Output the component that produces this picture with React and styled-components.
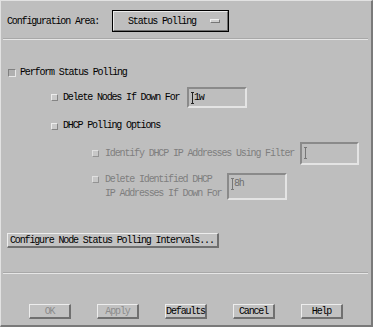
import React from "react";
import styled, { createGlobalStyle } from "styled-components";

const GlobalStyle = createGlobalStyle`
  body {
    margin: 0;
    background: #bebebe;
  }
  * {
    box-sizing: border-box;
  }
`;

const Dialog = styled.div`
  width: 373px;
  height: 327px;
  background: #bebebe;
  border-top: 1px solid #e2e2e2;
  border-left: 1px solid #e2e2e2;
  border-right: 2px solid #7a7a7a;
  border-bottom: 2px solid #7a7a7a;
  font-family: "Liberation Mono", "DejaVu Sans Mono", monospace;
  font-size: 10px;
  letter-spacing: -1.15px;
  color: #000;
  display: flex;
  flex-direction: column;
  overflow: hidden;
`;

const Header = styled.div`
  display: flex;
  align-items: center;
  height: 22px;
  margin-top: 9px;
  padding-left: 6px;
`;

const HeaderLabel = styled.span`
  width: 105px;
`;

const OptionMenu = styled.div`
  width: 117px;
  height: 22px;
  border: 1px solid #000;
  display: flex;
`;

const OptionFace = styled.div`
  flex: 1;
  display: flex;
  align-items: center;
  padding-left: 14px;
  border-top: 1px solid #ececec;
  border-left: 1px solid #ececec;
  border-right: 1px solid #6e6e6e;
  border-bottom: 1px solid #6e6e6e;
`;

const OptionText = styled.span`
  width: 82px;
`;

const Indicator = styled.span`
  width: 10px;
  height: 4px;
  background: #cfcfcf;
  border-top: 1px solid #f0f0f0;
  border-left: 1px solid #f0f0f0;
  border-right: 1px solid #777;
  border-bottom: 1px solid #777;
`;

const Separator = styled.div`
  margin: ${(p) => p.$top}px 3px 0 2px;
  height: 2px;
  border-top: 1px solid #a8a8a8;
  border-bottom: 1px solid #e6e6e6;
`;

const Row = styled.div`
  display: flex;
  align-items: ${(p) => (p.$top ? "flex-start" : "center")};
  margin-top: ${(p) => p.$mt}px;
  padding-left: ${(p) => p.$indent}px;
  min-height: ${(p) => p.$h || 14}px;
`;

const Check = styled.span`
  flex: none;
  width: ${(p) => (p.$big ? 8 : 7)}px;
  height: ${(p) => (p.$big ? 8 : 7)}px;
  margin-top: ${(p) => p.$mt || 0}px;
  margin-right: ${(p) => p.$gap || 5}px;
  background: ${(p) => (p.$sunken ? "#b0b0b0" : "#cacaca")};
  border-top: 1px solid ${(p) => (p.$sunken ? "#808080" : "#ececec")};
  border-left: 1px solid ${(p) => (p.$sunken ? "#808080" : "#ececec")};
  border-right: 1px solid ${(p) => (p.$sunken ? "#e8e8e8" : "#858585")};
  border-bottom: 1px solid ${(p) => (p.$sunken ? "#e8e8e8" : "#858585")};
  opacity: ${(p) => (p.$disabled ? 0.75 : 1)};
`;

const Label = styled.span`
  flex: none;
  width: ${(p) => (p.$w ? `${p.$w}px` : "auto")};
  line-height: 14px;
  color: ${(p) => (p.$disabled ? "#7e7e7e" : "#000")};
  white-space: pre;
`;

const Field = styled.div`
  flex: none;
  width: ${(p) => p.$w}px;
  height: ${(p) => p.$h}px;
  padding: 3px 0 0 3px;
  display: flex;
  align-items: flex-start;
  border-top: 2px solid #8a8a8a;
  border-left: 2px solid #8a8a8a;
  border-right: 2px solid #e4e4e4;
  border-bottom: 2px solid #e4e4e4;
  color: ${(p) => (p.$disabled ? "#6e6e6e" : "#000")};
  line-height: 12px;
`;

const Caret = styled.span`
  position: relative;
  width: 1px;
  height: 12px;
  margin-right: 1px;
  background: ${(p) => (p.$disabled ? "#777" : "#222")};
  &::before,
  &::after {
    content: "";
    position: absolute;
    left: -1px;
    width: 3px;
    height: 1px;
    background: inherit;
  }
  &::before {
    top: 0;
  }
  &::after {
    bottom: 0;
  }
`;

const PushButton = styled.div`
  flex: none;
  height: ${(p) => p.$h || 15}px;
  width: ${(p) => (p.$w ? `${p.$w}px` : "auto")};
  display: flex;
  align-items: center;
  justify-content: center;
  padding: ${(p) => (p.$w ? "0" : "0 3px 0 2px")};
  background: #c2c2c2;
  border-top: 1px solid #ededed;
  border-left: 1px solid #ededed;
  border-right: 2px solid #707070;
  border-bottom: 2px solid #707070;
  color: ${(p) => (p.$disabled ? "#8c8c8c" : "#000")};
`;

const ConfigureRow = styled.div`
  display: flex;
  margin-top: 32px;
  padding-left: 6px;
`;

const ButtonBar = styled.div`
  display: flex;
  gap: 26px;
  margin-top: 30px;
  padding-left: 28px;
`;

const App = () => (
  <>
    <GlobalStyle />
    <Dialog>
      <Header>
        <HeaderLabel>Configuration Area:</HeaderLabel>
        <OptionMenu>
          <OptionFace>
            <OptionText>Status Polling</OptionText>
            <Indicator />
          </OptionFace>
        </OptionMenu>
      </Header>
      <Separator $top={6} />

      <Row $mt={26} $indent={7}>
        <Check $big $sunken $gap={4} />
        <Label>Perform Status Polling</Label>
      </Row>

      <Row $mt={7} $indent={50} $h={21}>
        <Check $gap={5} />
        <Label $w={124}>Delete Nodes If Down For</Label>
        <Field $w={60} $h={21}>
          <Caret />
          1w
        </Field>
      </Row>

      <Row $mt={11} $indent={50}>
        <Check $gap={5} />
        <Label>DHCP Polling Options</Label>
      </Row>

      <Row $mt={9} $indent={91} $h={23}>
        <Check $disabled $gap={6} />
        <Label $w={195} $disabled>
          Identify DHCP IP Addresses Using Filter
        </Label>
        <Field $w={59} $h={23} $disabled>
          <Caret $disabled />
        </Field>
      </Row>

      <Row $mt={8} $indent={91} $h={27} $top>
        <Check $disabled $gap={6} $mt={3} />
        <Label $w={122} $disabled>
          {"Delete Identified DHCP\nIP Addresses If Down For"}
        </Label>
        <Field $w={60} $h={27} $disabled>
          <Caret $disabled />
          8h
        </Field>
      </Row>

      <ConfigureRow>
        <PushButton>Configure Node Status Polling Intervals...</PushButton>
      </ConfigureRow>

      <Separator $top={24} />

      <ButtonBar>
        <PushButton $w={42} $disabled>
          OK
        </PushButton>
        <PushButton $w={42} $disabled>
          Apply
        </PushButton>
        <PushButton $w={42}>Defaults</PushButton>
        <PushButton $w={42}>Cancel</PushButton>
        <PushButton $w={42}>Help</PushButton>
      </ButtonBar>
    </Dialog>
  </>
);

export default App;
